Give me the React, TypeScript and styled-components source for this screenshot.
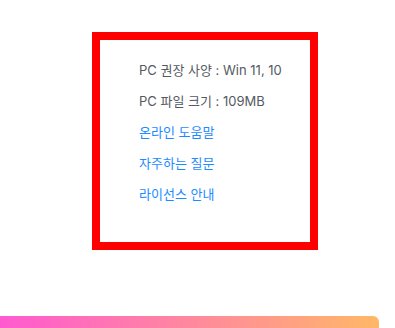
import React from 'react'
import styled, { createGlobalStyle } from 'styled-components'

const GlobalStyle = createGlobalStyle`
	html, body {
		margin: 0;
		padding: 0;
		background: #ffffff;
	}
	body {
		font-family: Inter, "Noto Sans CJK KR", sans-serif;
	}
`

const Page = styled.div`
	width: 395px;
	height: 328px;
	overflow: hidden;
	padding-top: 32px;
	box-sizing: border-box;
	display: flex;
	flex-direction: column;
`

const InfoBox = styled.div`
	margin-left: 92px;
	width: 226px;
	height: 218px;
	box-sizing: border-box;
	border: 8px solid #ff0000;
	padding: 20px 0 0 39px;
`

const InfoList = styled.ul`
	list-style: none;
	margin: 0;
	padding: 0;
	display: flex;
	flex-direction: column;
`

const InfoItem = styled.li<{ $link?: boolean }>`
	height: 31px;
	line-height: 20px;
	font-size: 13px;
	color: ${(p) => (p.$link ? '#1a8cff' : '#555a61')};
	white-space: nowrap;
	cursor: ${(p) => (p.$link ? 'pointer' : 'default')};
`

const GradientBar = styled.div`
	margin-top: 66px;
	width: 379px;
	height: 12px;
	border-top-right-radius: 6px;
	background: linear-gradient(90deg, #ff5ad0 0%, #ff7fa8 40%, #ff9a8a 70%, #ffb866 100%);
`

const items = [
	{ text: 'PC 권장 사양 : Win 11, 10' },
	{ text: 'PC 파일 크기 : 109MB' },
	{ text: '온라인 도움말', link: true },
	{ text: '자주하는 질문', link: true },
	{ text: '라이선스 안내', link: true },
]

const App = () => (
	<>
		<GlobalStyle />
		<Page>
			<InfoBox>
				<InfoList>
					{items.map((item) => (
						<InfoItem key={item.text} $link={item.link}>
							{item.text}
						</InfoItem>
					))}
				</InfoList>
			</InfoBox>
			<GradientBar />
		</Page>
	</>
)

export default App
